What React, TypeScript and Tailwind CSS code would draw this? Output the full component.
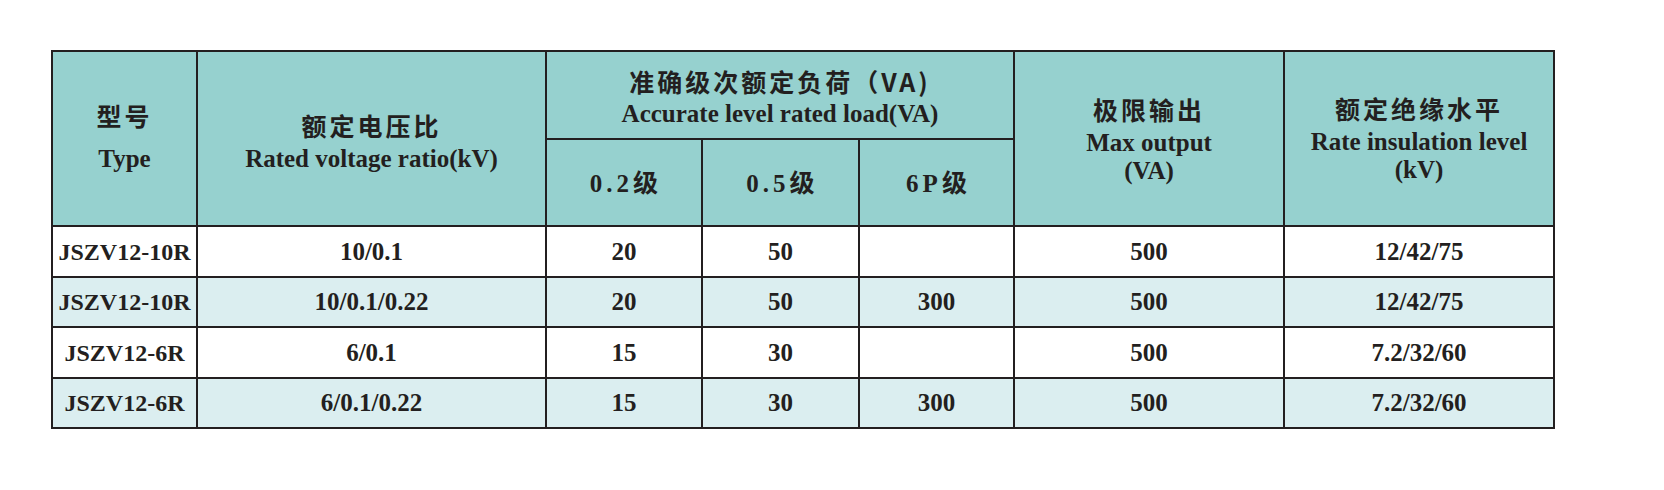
const cjk = "font-['Noto_Sans_CJK_SC',sans-serif] font-bold";
const serif = "font-['Liberation_Serif','Noto_Sans_CJK_SC',serif] font-bold";

const rows = [
  { type: "JSZV12-10R", ratio: "10/0.1", a: "20", b: "50", c: "", max: "500", ins: "12/42/75" },
  { type: "JSZV12-10R", ratio: "10/0.1/0.22", a: "20", b: "50", c: "300", max: "500", ins: "12/42/75" },
  { type: "JSZV12-6R", ratio: "6/0.1", a: "15", b: "30", c: "", max: "500", ins: "7.2/32/60" },
  { type: "JSZV12-6R", ratio: "6/0.1/0.22", a: "15", b: "30", c: "300", max: "500", ins: "7.2/32/60" },
];

function Head({ zh, en, gap }: { zh: string; en: string[]; gap?: boolean }) {
  return (
    <div className="flex flex-col items-center">
      <div className={`${cjk} text-[25px] leading-[40px] tracking-[3px] ${gap ? "mb-[10px]" : ""}`}>{zh}</div>
      {en.map((t) => (
        <div key={t} className={`${serif} text-[25px] leading-[28px]`}>
          {t}
        </div>
      ))}
    </div>
  );
}

export default function App() {
  const th = "border-2 border-[#231f20] bg-[#96d1cf] text-center align-middle p-0";
  const td = "border-2 border-[#231f20] text-center align-middle p-0";
  return (
    <div className="w-[1664px] h-[490px] bg-white pt-[50px] pl-[51px] text-[#231f20]">
      <table className="table-fixed border-collapse w-[1502px]">
        <colgroup>
          <col className="w-[145px]" />
          <col className="w-[349px]" />
          <col className="w-[156px]" />
          <col className="w-[157px]" />
          <col className="w-[155px]" />
          <col className="w-[270px]" />
          <col className="w-[270px]" />
        </colgroup>
        <thead>
          <tr className="h-[88px]">
            <th rowSpan={2} className={th}>
              <div className="pb-[10px]">
                <Head zh="型号" en={["Type"]} gap />
              </div>
            </th>
            <th rowSpan={2} className={th}>
              <Head zh="额定电压比" en={["Rated voltage ratio(kV)"]} />
            </th>
            <th colSpan={3} className={th}>
              <div className="flex flex-col items-center">
                <div className={`${cjk} text-[25px] leading-[38px] tracking-[3px]`}>准确级次额定负荷（VA)</div>
                <div className={`${serif} text-[25px] leading-[28px]`}>Accurate level rated load(VA)</div>
              </div>
            </th>
            <th rowSpan={2} className={th}>
              <div className="pb-[4px]">
                <Head zh="极限输出" en={["Max output", "(VA)"]} />
              </div>
            </th>
            <th rowSpan={2} className={th}>
              <div className="pb-[6px]">
                <Head zh="额定绝缘水平" en={["Rate insulation level", "(kV)"]} />
              </div>
            </th>
          </tr>
          <tr className="h-[87px]">
            {["0.2", "0.5", "6P"].map((g) => (
              <th key={g} className={th}>
                <span className={`${serif} text-[25px] tracking-[4px]`}>{g}</span>
                <span className={`${cjk} text-[25px]`}>级</span>
              </th>
            ))}
          </tr>
        </thead>
        <tbody>
          {rows.map((r, i) => (
            <tr
              key={i}
              className={i % 2 === 1 ? "h-[50px] bg-[#dbeef0]" : "h-[51px] bg-white"}
            >
              <td className={`${td} ${serif} text-[24px]`}>{r.type}</td>
              <td className={`${td} ${serif} text-[25px]`}>{r.ratio}</td>
              <td className={`${td} ${serif} text-[25px]`}>{r.a}</td>
              <td className={`${td} ${serif} text-[25px]`}>{r.b}</td>
              <td className={`${td} ${serif} text-[25px]`}>{r.c}</td>
              <td className={`${td} ${serif} text-[25px]`}>{r.max}</td>
              <td className={`${td} ${serif} text-[25px]`}>{r.ins}</td>
            </tr>
          ))}
        </tbody>
      </table>
    </div>
  );
}
